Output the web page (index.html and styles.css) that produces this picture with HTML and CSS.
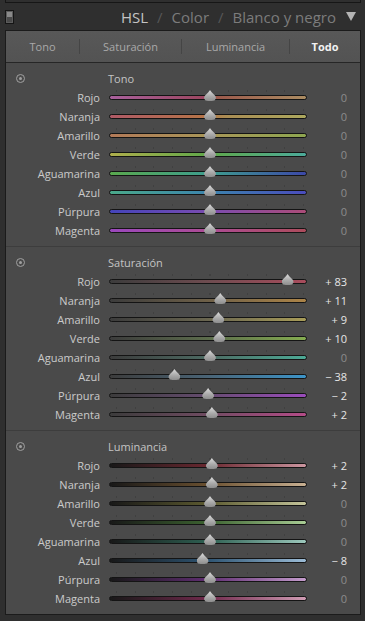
FILE: index.html
```html
<!DOCTYPE html>
<html lang="es">
<head>
<meta charset="utf-8">
<title>HSL</title>
<link rel="stylesheet" href="styles.css">
</head>
<body>
<div class="topline"></div>
<header class="header">
  <span class="switch"></span>
  <div class="title">
    <span class="t-on">HSL</span><span class="slash">/</span><span class="t-off">Color</span><span class="slash">/</span><span class="t-off">Blanco y negro</span>
    <span class="caret"></span>
  </div>
</header>
<main class="panel">
  <nav class="tabs">
    <span class="tab tab-1">Tono</span><span class="sep"></span>
    <span class="tab tab-2">Saturación</span><span class="sep"></span>
    <span class="tab tab-3">Luminancia</span><span class="sep"></span>
    <span class="tab tab-4 active">Todo</span>
  </nav>

  <section class="group">
    <div class="row head"><span class="lab"><span class="target"></span></span><span class="gtitle">Tono</span><span></span></div>
    <div class="row"><span class="lab">Rojo</span><span class="track h-rojo"><i class="thumb" style="--v:0"></i></span><span class="val">0</span></div>
    <div class="row"><span class="lab">Naranja</span><span class="track h-naranja"><i class="thumb" style="--v:0"></i></span><span class="val">0</span></div>
    <div class="row"><span class="lab">Amarillo</span><span class="track h-amarillo"><i class="thumb" style="--v:0"></i></span><span class="val">0</span></div>
    <div class="row"><span class="lab">Verde</span><span class="track h-verde"><i class="thumb" style="--v:0"></i></span><span class="val">0</span></div>
    <div class="row"><span class="lab">Aguamarina</span><span class="track h-agua"><i class="thumb" style="--v:0"></i></span><span class="val">0</span></div>
    <div class="row"><span class="lab">Azul</span><span class="track h-azul"><i class="thumb" style="--v:0"></i></span><span class="val">0</span></div>
    <div class="row"><span class="lab">Púrpura</span><span class="track h-purpura"><i class="thumb" style="--v:0"></i></span><span class="val">0</span></div>
    <div class="row"><span class="lab">Magenta</span><span class="track h-magenta"><i class="thumb" style="--v:0"></i></span><span class="val">0</span></div>
  </section>

  <section class="group">
    <div class="row head"><span class="lab"><span class="target"></span></span><span class="gtitle">Saturación</span><span></span></div>
    <div class="row"><span class="lab">Rojo</span><span class="track s-rojo"><i class="thumb" style="--v:83"></i></span><span class="val on">+ 83</span></div>
    <div class="row"><span class="lab">Naranja</span><span class="track s-naranja"><i class="thumb" style="--v:11"></i></span><span class="val on">+ 11</span></div>
    <div class="row"><span class="lab">Amarillo</span><span class="track s-amarillo"><i class="thumb" style="--v:9"></i></span><span class="val on">+ 9</span></div>
    <div class="row"><span class="lab">Verde</span><span class="track s-verde"><i class="thumb" style="--v:10"></i></span><span class="val on">+ 10</span></div>
    <div class="row"><span class="lab">Aguamarina</span><span class="track s-agua"><i class="thumb" style="--v:0"></i></span><span class="val">0</span></div>
    <div class="row"><span class="lab">Azul</span><span class="track s-azul"><i class="thumb" style="--v:-38"></i></span><span class="val on">− 38</span></div>
    <div class="row"><span class="lab">Púrpura</span><span class="track s-purpura"><i class="thumb" style="--v:-2"></i></span><span class="val on">− 2</span></div>
    <div class="row"><span class="lab">Magenta</span><span class="track s-magenta"><i class="thumb" style="--v:2"></i></span><span class="val on">+ 2</span></div>
  </section>

  <section class="group last">
    <div class="row head"><span class="lab"><span class="target"></span></span><span class="gtitle">Luminancia</span><span></span></div>
    <div class="row"><span class="lab">Rojo</span><span class="track l-rojo"><i class="thumb" style="--v:2"></i></span><span class="val on">+ 2</span></div>
    <div class="row"><span class="lab">Naranja</span><span class="track l-naranja"><i class="thumb" style="--v:2"></i></span><span class="val on">+ 2</span></div>
    <div class="row"><span class="lab">Amarillo</span><span class="track l-amarillo"><i class="thumb" style="--v:0"></i></span><span class="val">0</span></div>
    <div class="row"><span class="lab">Verde</span><span class="track l-verde"><i class="thumb" style="--v:0"></i></span><span class="val">0</span></div>
    <div class="row"><span class="lab">Aguamarina</span><span class="track l-agua"><i class="thumb" style="--v:0"></i></span><span class="val">0</span></div>
    <div class="row"><span class="lab">Azul</span><span class="track l-azul"><i class="thumb" style="--v:-8"></i></span><span class="val on">− 8</span></div>
    <div class="row"><span class="lab">Púrpura</span><span class="track l-purpura"><i class="thumb" style="--v:0"></i></span><span class="val">0</span></div>
    <div class="row"><span class="lab">Magenta</span><span class="track l-magenta"><i class="thumb" style="--v:0"></i></span><span class="val">0</span></div>
  </section>
</main>
</body>
</html>
```
FILE: styles.css
```css
* { box-sizing: border-box; margin: 0; padding: 0; }
body {
  width: 365px;
  height: 621px;
  overflow: hidden;
  background: #2f2f2f;
  font-family: "Open Sans", "Noto Sans", sans-serif;
  font-size: 11px;
  color: #c6c6c6;
}
.topline {
  height: 3px;
  margin: 0 4px 0 5px;
  border: 1px solid #161616;
  border-top: 0;
}
.header {
  height: 27px;
  display: flex;
  align-items: center;
  padding: 0 9px 0 5px;
}
.switch {
  width: 9px;
  height: 14px;
  border: 1px solid #151515;
  background: linear-gradient(#8a8a8a 0 50%, #4a4a4a 50% 100%);
  box-shadow: inset 0 0 0 1px #5c5c5c;
}
.title {
  margin-left: auto;
  display: flex;
  align-items: center;
  font-size: 15px;
  line-height: 20px;
  color: #7a7a7a;
}
.t-on { color: #c4c4c4; }
.t-off { color: #7c7c7c; }
.slash { color: #575757; margin: 0 9px; }
.caret {
  width: 0;
  height: 0;
  margin-left: 10px;
  border-left: 5px solid transparent;
  border-right: 5px solid transparent;
  border-top: 9px solid #b4b4b4;
}
.panel {
  margin: 0 4px 0 5px;
  height: 585px;
  border: 1px solid #1b1b1b;
  background: #4a4a4a;
}
.tabs {
  height: 32px;
  display: flex;
  align-items: center;
  background: linear-gradient(#585858, #535353);
  border-bottom: 1px solid #262626;
}
.tab {
  text-align: center;
  color: #a9a9a9;
  font-size: 11px;
  line-height: 31px;
}
.tab-1 { width: 73px; }
.tab-2 { width: 101px; }
.tab-3 { width: 107px; }
.tab-4 { width: 70px; }
.tab.active { color: #f2f2f2; font-weight: bold; }
.sep {
  width: 1px;
  height: 15px;
  background: #454545;
}
.group {
  padding: 6px 0;
  border-bottom: 1px solid #3d3d3d;
}
.group.last { border-bottom: 0; }
.row {
  height: 19px;
  display: grid;
  grid-template-columns: 103px 198px 40px;
  align-items: center;
}
.lab {
  text-align: right;
  padding-right: 9px;
  color: #cbcbcb;
  line-height: 19px;
  white-space: nowrap;
}
.head .lab { text-align: left; padding-left: 10px; display: flex; align-items: center; }
.target {
  width: 9px;
  height: 9px;
  border: 1px solid #a0a0a0;
  border-radius: 50%;
  display: flex;
  align-items: center;
  justify-content: center;
}
.target::after {
  content: "";
  width: 3px;
  height: 3px;
  border-radius: 50%;
  background: #a0a0a0;
}
.gtitle { color: #c4c4c4; line-height: 19px; margin-left: -1px; }
.val {
  text-align: right;
  color: #8c8c8c;
  line-height: 19px;
}
.val.on { color: #e6e6e6; }

.track {
  position: relative;
  height: 5px;
  border: 1px solid #141414;
  border-radius: 3px;
}
.track::before {
  content: "";
  position: absolute;
  left: 6px;
  width: 188px;
  top: -6px;
  height: 2px;
  background: repeating-linear-gradient(90deg, #404040 0 1px, transparent 1px 18.7px);
}
.thumb {
  position: absolute;
  top: -6px;
  left: calc(50% + var(--v) * 0.935px);
  margin-left: -4px;
  width: 12px;
  height: 11px;
  background: linear-gradient(#dadada, #a8a8a8 60%, #8e8e8e);
  clip-path: polygon(50% 0, 64% 20%, 95% 55%, 100% 75%, 88% 95%, 65% 100%, 35% 100%, 12% 95%, 0 75%, 5% 55%, 36% 20%);
}

/* Hue */
.h-rojo { background: linear-gradient(90deg, #a8609c, #9c4660 48%, #9c5a4c 55%, #ab8c62); }
.h-naranja { background: linear-gradient(90deg, #b05a66, #b67448 48%, #aa8e54 60%, #aca85e); }
.h-amarillo { background: linear-gradient(90deg, #b27a58, #a89658 50%, #8ea650); }
.h-verde { background: linear-gradient(90deg, #aeae4c, #60a84a 50%, #4caa9a); }
.h-agua { background: linear-gradient(90deg, #5aa84e, #3e9e8e 50%, #3c48a8); }
.h-azul { background: linear-gradient(90deg, #4aa88a, #3c84ac 50%, #4a4cbc); }
.h-purpura { background: linear-gradient(90deg, #4444ba, #7a4cb0 50%, #ac4c78); }
.h-magenta { background: linear-gradient(90deg, #9a48bc, #ac4c94 50%, #ac4c5c); }

/* Saturation */
.s-rojo { background: linear-gradient(90deg, #3c3c3c, #6e4c50 50%, #a84c5c); }
.s-naranja { background: linear-gradient(90deg, #3c3c3c, #6e6048 50%, #ac8448); }
.s-amarillo { background: linear-gradient(90deg, #3c3c3c, #6a6650 50%, #a89c58); }
.s-verde { background: linear-gradient(90deg, #3c3c3c, #5c6c4c 50%, #84ac50); }
.s-agua { background: linear-gradient(90deg, #3c3c3c, #4c6a62 50%, #4caa96); }
.s-azul { background: linear-gradient(90deg, #3c3c3c, #4a6476 50%, #3c94c8); }
.s-purpura { background: linear-gradient(90deg, #3c3c3c, #664c70 50%, #9a4cbc); }
.s-magenta { background: linear-gradient(90deg, #3c3c3c, #704c62 50%, #b44c88); }

/* Luminance */
.l-rojo { background: linear-gradient(90deg, #181818, #6a2830 50%, #cc96a0); }
.l-naranja { background: linear-gradient(90deg, #181818, #6a5030 50%, #c8b092); }
.l-amarillo { background: linear-gradient(90deg, #181818, #5c5a30 50%, #c4c49a); }
.l-verde { background: linear-gradient(90deg, #181818, #3c6230 50%, #a8cc94); }
.l-agua { background: linear-gradient(90deg, #181818, #2e6052 50%, #9cc8bc); }
.l-azul { background: linear-gradient(90deg, #181818, #2e5472 50%, #9cbcd6); }
.l-purpura { background: linear-gradient(90deg, #181818, #602e72 50%, #c49ccc); }
.l-magenta { background: linear-gradient(90deg, #181818, #702a4c 50%, #d09cb4); }
```
